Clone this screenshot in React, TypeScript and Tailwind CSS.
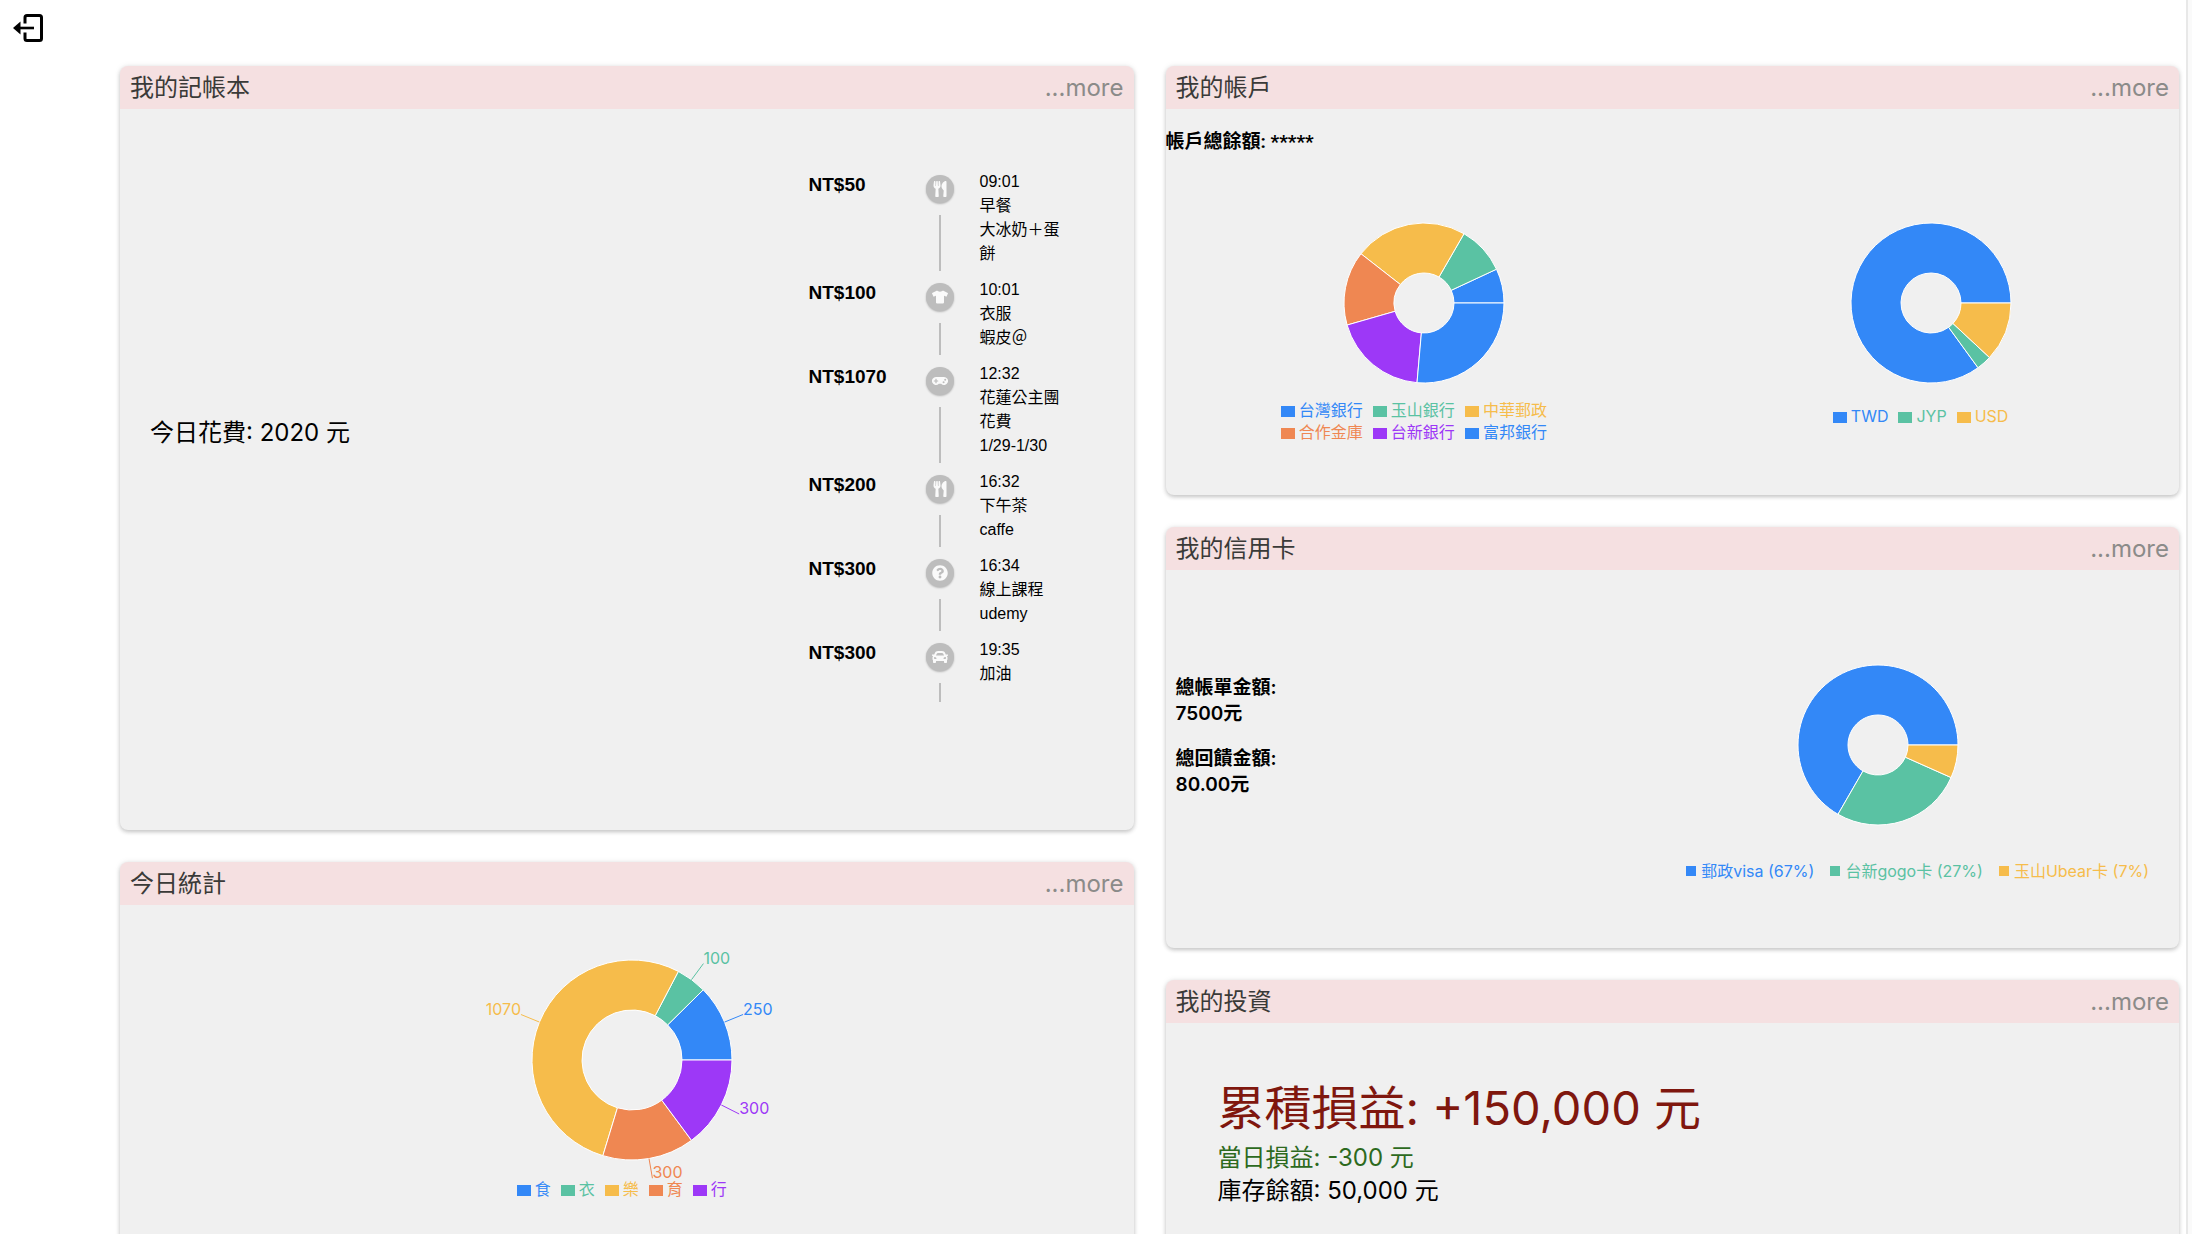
import React from "react";
import { FaUtensils, FaTshirt, FaGamepad, FaQuestionCircle, FaCar } from "react-icons/fa";

const BLUE = "#3388f7";
const GREEN = "#5ac2a3";
const YELLOW = "#f6bc4b";
const ORANGE = "#ef8752";
const PURPLE = "#9d38f7";

type Slice = { name: string; value: number; color: string };

const todayStats: Slice[] = [
  { name: "食", value: 250, color: BLUE },
  { name: "衣", value: 100, color: GREEN },
  { name: "樂", value: 1070, color: YELLOW },
  { name: "育", value: 300, color: ORANGE },
  { name: "行", value: 300, color: PURPLE },
];

const banks: Slice[] = [
  { name: "台灣銀行", value: 25, color: BLUE },
  { name: "玉山銀行", value: 35, color: GREEN },
  { name: "中華郵政", value: 82, color: YELLOW },
  { name: "合作金庫", value: 54, color: ORANGE },
  { name: "台新銀行", value: 69, color: PURPLE },
  { name: "富邦銀行", value: 95, color: BLUE },
];

const currencies: Slice[] = [
  { name: "TWD", value: 306, color: BLUE },
  { name: "JYP", value: 11, color: GREEN },
  { name: "USD", value: 43, color: YELLOW },
];

const cards: Slice[] = [
  { name: "郵政visa", value: 5000, color: BLUE },
  { name: "台新gogo卡", value: 2000, color: GREEN },
  { name: "玉山Ubear卡", value: 500, color: YELLOW },
];

const records = [
  { amount: "NT$50", time: "09:01", lines: ["早餐", "大冰奶＋蛋餅"], Icon: FaUtensils },
  { amount: "NT$100", time: "10:01", lines: ["衣服", "蝦皮＠"], Icon: FaTshirt },
  { amount: "NT$1070", time: "12:32", lines: ["花蓮公主團花費", "1/29-1/30"], Icon: FaGamepad },
  { amount: "NT$200", time: "16:32", lines: ["下午茶", "caffe"], Icon: FaUtensils },
  { amount: "NT$300", time: "16:34", lines: ["線上課程", "udemy"], Icon: FaQuestionCircle },
  { amount: "NT$300", time: "19:35", lines: ["加油"], Icon: FaCar },
];

function total(data: Slice[]) {
  return data.reduce((sum, s) => sum + s.value, 0);
}

function point(r: number, angle: number) {
  const a = (angle * Math.PI) / 180;
  return [r * Math.cos(a), -r * Math.sin(a)];
}

function Donut({
  data,
  outer,
  inner,
  label,
  labelled = false,
}: {
  data: Slice[];
  outer: number;
  inner: number;
  label: string;
  labelled?: boolean;
}) {
  const sum = total(data);
  const w = outer + (labelled ? 60 : 2);
  const h = outer + (labelled ? 24 : 2);
  let angle = 0;
  return (
    <svg
      role="img"
      aria-label={label}
      width={w * 2}
      height={h * 2}
      viewBox={`${-w} ${-h} ${w * 2} ${h * 2}`}
      className="shrink-0 overflow-visible"
    >
      {data.map((s) => {
        const start = angle;
        const end = angle + (s.value / sum) * 360;
        angle = end;
        const large = end - start > 180 ? 1 : 0;
        const [x1, y1] = point(outer, start);
        const [x2, y2] = point(outer, end);
        const [x3, y3] = point(inner, end);
        const [x4, y4] = point(inner, start);
        const mid = (start + end) / 2;
        const [lx1, ly1] = point(outer, mid);
        const [lx2, ly2] = point(outer + 20, mid);
        return (
          <g key={s.name}>
            <path
              d={`M${x1} ${y1}A${outer} ${outer} 0 ${large} 0 ${x2} ${y2}L${x3} ${y3}A${inner} ${inner} 0 ${large} 1 ${x4} ${y4}Z`}
              fill={s.color}
              stroke="#fff"
            />
            {labelled && (
              <>
                <path d={`M${lx1} ${ly1}L${lx2} ${ly2}`} stroke={s.color} fill="none" />
                <text x={lx2} y={ly2} fill={s.color} fontSize="16" textAnchor={lx2 > 0 ? "start" : "end"}>
                  {s.value}
                </text>
              </>
            )}
          </g>
        );
      })}
    </svg>
  );
}

function Legend({ data }: { data: Slice[] }) {
  return (
    <ul className="flex flex-wrap justify-center text-base leading-[22px]">
      {data.map((s) => (
        <li key={s.name} className="mr-2.5 flex items-center gap-1" style={{ color: s.color }}>
          <span className="mt-[3px] h-[11px] w-3.5 bg-current" />
          {s.name}
        </li>
      ))}
    </ul>
  );
}

function Card({ title, children }: { title: string; children: React.ReactNode }) {
  return (
    <section className="overflow-hidden rounded-lg bg-[#f0f0f0] shadow-[0_2px_4px_rgba(0,0,0,0.2),0_0_6px_rgba(0,0,0,0.08)]">
      <header className="flex items-center justify-between bg-[#f5e0e1] px-2.5 py-2 text-2xl leading-[27px]">
        <h2 className="text-[#3a3a38]">{title}</h2>
        <a href="#more" className="text-[#8b8b89]">
          ...more
        </a>
      </header>
      {children}
    </section>
  );
}

function Ledger() {
  return (
    <Card title="我的記帳本">
      <div className="flex items-center justify-between pt-12 pr-[62px] pb-[122px] pl-[30px]">
        <p className="text-2xl">今日花費: 2020 元</p>
        <ul className="py-1.5 font-['Liberation_Sans','Noto_Sans_CJK_TC',sans-serif]">
          {records.map(({ amount, time, lines, Icon }) => (
            <li key={time} className="flex min-h-[71px]">
              <div className="w-[117px] pt-2 text-[19px] leading-7 font-bold">{amount}</div>
              <div className="flex w-7 flex-col items-center">
                <span className="my-3 flex size-7 items-center justify-center rounded-full bg-[#bdbdbd] text-[#fafafa] shadow-[0_1px_2px_rgba(0,0,0,0.25)]">
                  <Icon size={16} aria-hidden />
                </span>
                <span className="w-0.5 grow bg-[#bdbdbd]" />
              </div>
              <div className="w-[118px] pt-[7px] pb-[5px] pl-[26px] text-base leading-6">
                <div>{time}</div>
                {lines.map((line) => (
                  <div key={line}>{line}</div>
                ))}
              </div>
            </li>
          ))}
        </ul>
      </div>
    </Card>
  );
}

function Stats() {
  return (
    <Card title="今日統計">
      <div className="flex flex-col items-center pt-[31px] pb-12">
        <div className="pl-2.5">
          <Donut data={todayStats} outer={100} inner={50} label="今日統計" labelled />
        </div>
        <div className="-mt-1.5">
          <Legend data={todayStats} />
        </div>
      </div>
    </Card>
  );
}

function Accounts() {
  return (
    <Card title="我的帳戶">
      <h3 className="pt-5 font-['Roboto','Noto_Sans_CJK_TC',sans-serif] text-[19px] leading-[26px] font-bold">
        帳戶總餘額: *****
      </h3>
      <div className="grid grid-cols-2 pt-[66px] pb-[52px]">
        <div className="flex flex-col items-center gap-[14px]">
          <div className="pl-2.5">
            <Donut data={banks} outer={80} inner={30} label="銀行" />
          </div>
          <div className="max-w-[300px]">
            <Legend data={banks} />
          </div>
        </div>
        <div className="flex flex-col items-center gap-5">
          <div className="pl-2.5">
            <Donut data={currencies} outer={80} inner={30} label="幣別" />
          </div>
          <Legend data={currencies} />
        </div>
      </div>
    </Card>
  );
}

function CreditCards() {
  const sum = total(cards);
  return (
    <Card title="我的信用卡">
      <div className="grid grid-cols-2 pt-[93px] pb-[65px]">
        <dl className="pt-3 pl-2.5 text-[19px] leading-[26px] font-semibold">
          <dt>總帳單金額:</dt>
          <dd>7500元</dd>
          <dt className="mt-[19px]">總回饋金額:</dt>
          <dd>80.00元</dd>
        </dl>
        <div className="flex flex-col items-center">
          <div className="pr-24">
            <Donut data={cards} outer={80} inner={30} label="信用卡" />
          </div>
          <ul className="flex pt-8 text-base leading-6">
            {cards.map((s) => (
              <li key={s.name} className="mr-4 flex items-center gap-[5px] whitespace-nowrap" style={{ color: s.color }}>
                <span className="size-2.5 bg-current" />
                {s.name} ({Math.round((s.value / sum) * 100)}%)
              </li>
            ))}
          </ul>
        </div>
      </div>
    </Card>
  );
}

function Investments() {
  return (
    <Card title="我的投資">
      <div className="px-[52px] pt-[51px] pb-12 text-2xl leading-[33px]">
        <p className="text-[47px] leading-[67px] text-[#7f170e]">累積損益: +150,000 元</p>
        <p className="text-[#2d6a1e]">當日損益: -300 元</p>
        <p>庫存餘額: 50,000 元</p>
      </div>
    </Card>
  );
}

export default function App() {
  return (
    <div className="flex h-screen overflow-hidden bg-white font-['Inter','Noto_Sans_CJK_TC',sans-serif] text-black">
      <div className="w-[120px] shrink-0 pt-3 pl-3">
        <button type="button" aria-label="登出" className="block">
          <svg width="32" height="32" viewBox="0 0 32 32" fill="none" aria-hidden>
            <path
              d="M13 11.5V5.5a2 2 0 0 1 2-2h12.5a2 2 0 0 1 2 2v21a2 2 0 0 1-2 2H15a2 2 0 0 1-2-2v-6"
              stroke="#000"
              strokeWidth="3"
            />
            <path d="M8 16h14" stroke="#000" strokeWidth="2.6" />
            <path d="M1 16l7.5-6.5v13z" fill="#000" />
          </svg>
        </button>
      </div>
      <main className="grid grow grid-cols-2 items-start gap-8 pt-[66px] pr-[7px]">
        <div className="flex flex-col gap-8">
          <Ledger />
          <Stats />
        </div>
        <div className="flex flex-col gap-8">
          <Accounts />
          <CreditCards />
          <Investments />
        </div>
      </main>
      <div className="w-1.5 shrink-0 border-l-2 border-[#e8e8e8] bg-[#fafafa]" />
    </div>
  );
}
